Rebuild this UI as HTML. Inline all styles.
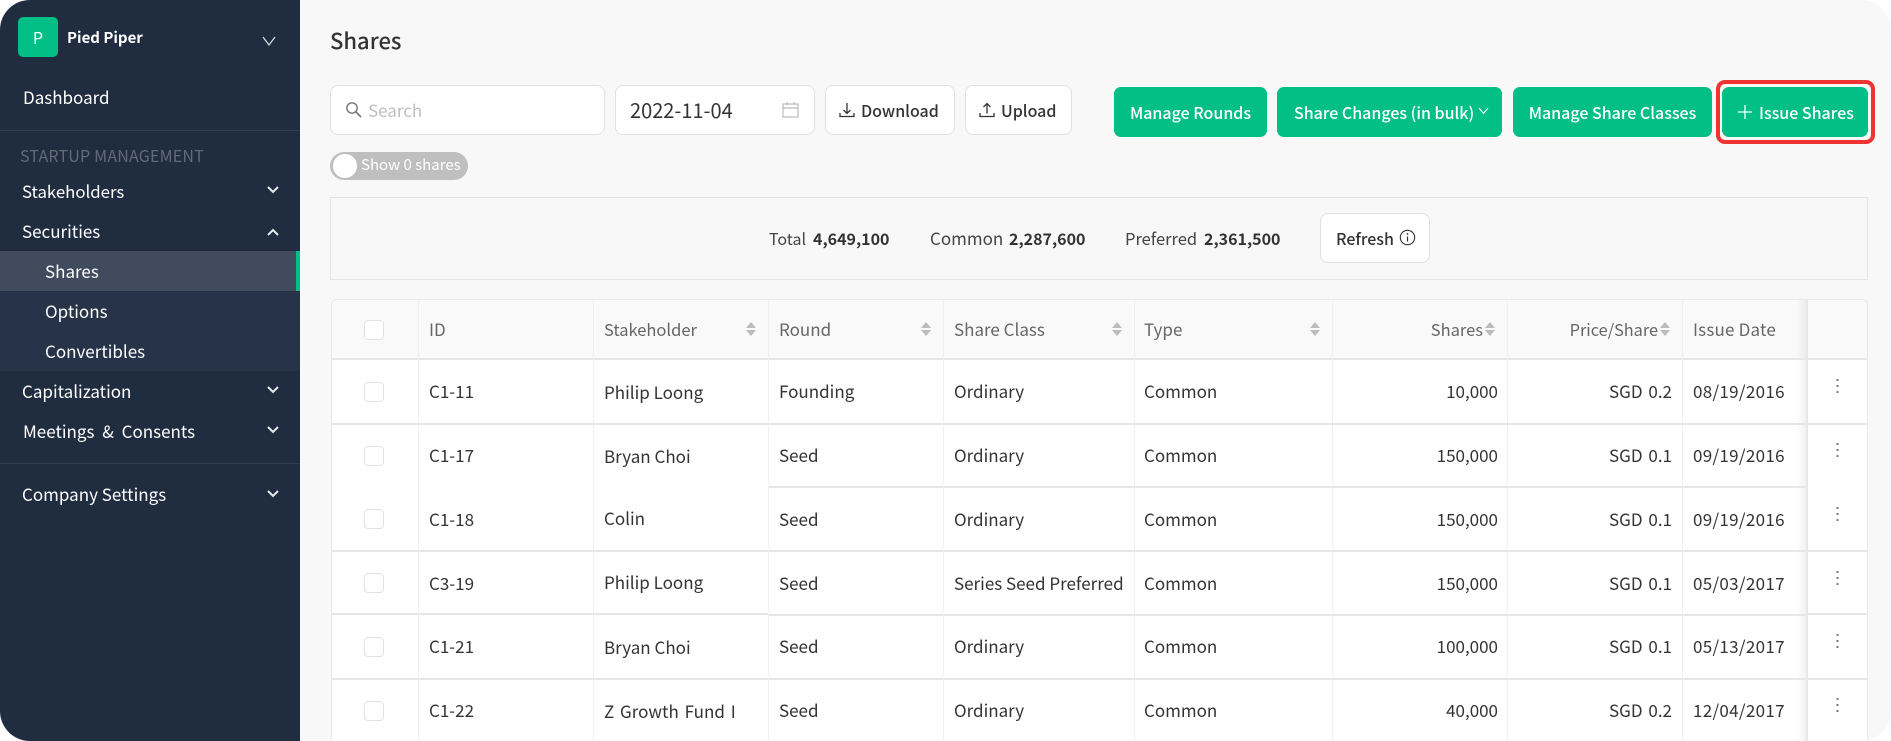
<!DOCTYPE html>
<html><head><meta charset="utf-8"><title>Shares</title>
<style>
html,body{margin:0;padding:0;background:#fff;width:1891px;height:741px;overflow:hidden}
body{font-family:"Noto Sans CJK KR","Liberation Sans",sans-serif;font-size:17px;color:#333}
#app{position:absolute;left:0;top:0;width:1891px;height:741px;background:#f8f8f8;border-radius:30px;overflow:hidden}
.a,.t,.b,.r,.h,.v{position:absolute}
.t{line-height:24px;height:24px;white-space:nowrap}
.s{color:#fff}
.r{line-height:24px;height:24px;white-space:nowrap;text-align:right}
.box{position:absolute;background:#fff;border:1px solid #e0e0e0;border-radius:8px;box-sizing:border-box}
.g{position:absolute;top:87px;height:50px;background:#02bf85;border-radius:7px;color:#fff;font-weight:500;line-height:50px;text-align:center;white-space:nowrap;font-size:16px}
.h{height:1.5px;background:#e6e6e6}
.v{width:1px;background:#f0f0f0}
.c{position:absolute;left:364px;width:20px;height:20px;box-sizing:border-box;background:#fff;border:1px solid #e2e2e2;border-radius:4px}
.hd{color:#666}
.n{font-size:16px;font-weight:700}
.m{font-size:16px;font-weight:500}
.d{letter-spacing:.3px}
.p{word-spacing:2px}
svg{position:absolute;display:block}
</style></head><body>
<div id="app">
<div class="a" style="left:0;top:0;width:300px;height:741px;background:#202c3f"></div>
<div class="a" style="left:0;top:251px;width:300px;height:120px;background:#263348"></div>
<div class="a" style="left:0;top:251px;width:296px;height:40px;background:#404b5d"></div>
<div class="a" style="left:296px;top:251px;width:4px;height:40px;background:#02bf85"></div>
<div class="a" style="left:18px;top:17px;width:40px;height:40px;background:#02bf85;border-radius:5px;color:#fff;text-align:center;line-height:40px;font-size:16px">P</div>
<div class="t s" style="left:67px;top:26px;font-size:15px;font-weight:700">Pied Piper</div>
<svg style="left:262px;top:36px" width="14" height="10" viewBox="0 0 14 10"><path d="M1 1l6 8 6-8" fill="none" stroke="#dfe3e8" stroke-width="1.2"/></svg>
<div class="t s" style="left:23px;top:85px;font-size:17px">Dashboard</div>
<div class="a" style="left:0;top:130px;width:300px;height:1px;background:#323e50"></div>
<div class="t" style="left:20px;top:143px;font-size:16px;letter-spacing:.2px;color:#626b7a">STARTUP MANAGEMENT</div>
<div class="t s" style="left:22px;top:179px;font-size:16.800px">Stakeholders</div>
<svg style="left:267px;top:186px" width="12" height="8" viewBox="0 0 12 8"><path d="M1 1l5 5 5-5" fill="none" stroke="#e8eaed" stroke-width="2"/></svg>
<div class="t s" style="left:22px;top:219px;font-size:17px">Securities</div>
<svg style="left:267px;top:228px" width="12" height="8" viewBox="0 0 12 8"><path d="M1 7l5-5 5 5" fill="none" stroke="#e8eaed" stroke-width="2"/></svg>
<div class="t s" style="left:45px;top:259px;font-size:17px">Shares</div>
<div class="t s" style="left:45px;top:299px;font-size:17px">Options</div>
<div class="t s" style="left:45px;top:339px;font-size:17px">Convertibles</div>
<div class="t s" style="left:22px;top:379px;font-size:17px">Capitalization</div>
<svg style="left:267px;top:386px" width="12" height="8" viewBox="0 0 12 8"><path d="M1 1l5 5 5-5" fill="none" stroke="#e8eaed" stroke-width="2"/></svg>
<div class="t s" style="left:23px;top:419px;font-size:17px;word-spacing:4px">Meetings &amp; Consents</div>
<svg style="left:267px;top:426px" width="12" height="8" viewBox="0 0 12 8"><path d="M1 1l5 5 5-5" fill="none" stroke="#e8eaed" stroke-width="2"/></svg>
<div class="a" style="left:0;top:463px;width:300px;height:1px;background:#323e50"></div>
<div class="t s" style="left:22px;top:482px;font-size:17px">Company Settings</div>
<svg style="left:267px;top:490px" width="12" height="8" viewBox="0 0 12 8"><path d="M1 1l5 5 5-5" fill="none" stroke="#e8eaed" stroke-width="2"/></svg>

<div class="t" style="left:330px;top:28px;font-size:22px;font-weight:500;color:#333">Shares</div>

<div class="box" style="left:330px;top:85px;width:275px;height:50px"></div>
<svg style="left:345px;top:101px" width="18" height="18" viewBox="0 0 18 18"><circle cx="7" cy="7" r="5.2" fill="none" stroke="#777" stroke-width="1.4"/><path d="M11 11l5 5" stroke="#777" stroke-width="1.6"/></svg>
<div class="t" style="left:368px;top:98px;color:#bfbfbf">Search</div>
<div class="box" style="left:615px;top:85px;width:200px;height:50px"></div>
<div class="t" style="left:630px;top:98px;font-size:20px;color:#333">2022-11-04</div>
<svg style="left:782px;top:101px" width="17" height="17" viewBox="0 0 17 17"><rect x="1" y="3" width="15" height="13" fill="none" stroke="#bbb" stroke-width="1.2"/><path d="M1 7h15M5 1v3M12 1v3" stroke="#bbb" stroke-width="1.2"/></svg>
<div class="box" style="left:825px;top:85px;width:130px;height:50px"></div>
<svg style="left:839px;top:102px" width="16" height="16" viewBox="0 0 16 16"><path d="M8 1v10M4.500 8l3.500 3.500L11.500 8M1 11v3.500h14V11" fill="none" stroke="#333" stroke-width="1.300"/></svg>
<div class="t m" style="left:861px;top:98px;color:#333">Download</div>
<div class="box" style="left:965px;top:85px;width:107px;height:50px"></div>
<svg style="left:979px;top:102px" width="16" height="16" viewBox="0 0 16 16"><path d="M8 11.500V1.500M4.500 5L8 1.500 11.500 5M1 11v3.500h14V11" fill="none" stroke="#333" stroke-width="1.300"/></svg>
<div class="t m" style="left:1001px;top:98px;color:#333">Upload</div>

<div class="a" style="left:330px;top:152px;width:138px;height:28px;border-radius:14px;background:#bfbfbf"></div>
<div class="a" style="left:333px;top:154px;width:24px;height:24px;border-radius:50%;background:#fff"></div>
<div class="t" style="left:361px;top:153px;font-size:15px;color:#fff">Show 0 shares</div>

<div class="g" style="left:1114px;width:153px">Manage Rounds</div>
<div class="g" style="left:1277px;width:225px;text-align:left;text-indent:17px">Share Changes (in bulk)</div>
<svg style="left:1478px;top:107px" width="11" height="8" viewBox="0 0 11 8"><path d="M1 1l4.500 5.500L10 1" fill="none" stroke="#fff" stroke-width="1"/></svg>
<div class="g" style="left:1513px;width:199px">Manage Share Classes</div>
<div class="g" style="left:1722px;width:146px;text-align:left;text-indent:37px">Issue Shares</div>
<svg style="left:1737px;top:104px" width="16" height="16" viewBox="0 0 16 16"><path d="M8 1v14M1 8h14" stroke="#fff" stroke-width="1.300"/></svg>
<div class="a" style="left:1716px;top:80px;width:159px;height:64px;box-sizing:border-box;border:4px solid #ef3434;border-radius:9px"></div>

<div class="a" style="left:330px;top:197px;width:1538px;height:83px;box-sizing:border-box;border:1px solid #e4e4e4"></div>
<div class="t" style="left:769px;top:226px;font-size:16px;color:#444">Total</div>
<div class="t n" style="left:813px;top:226px">4,649,100</div>
<div class="t" style="left:930px;top:226px;color:#444">Common</div>
<div class="t n" style="left:1009px;top:226px">2,287,600</div>
<div class="t" style="left:1125px;top:226px;font-size:16.500px;color:#444">Preferred</div>
<div class="t n" style="left:1204px;top:226px">2,361,500</div>
<div class="box" style="left:1320px;top:213px;width:110px;height:50px"></div>
<div class="t m" style="left:1336px;top:226px">Refresh</div>
<svg style="left:1399px;top:229px" width="17" height="17" viewBox="0 0 17 17"><circle cx="8.500" cy="8.500" r="7.200" fill="none" stroke="#333" stroke-width="1.100"/><path d="M8.500 7.500v5" stroke="#333" stroke-width="1.200"/><circle cx="8.500" cy="5" r="0.900" fill="#333"/></svg>

<!-- table -->
<div class="a" style="left:331px;top:299px;width:1537px;height:442px;background:#fff;border:1px solid #e8e8e8;border-bottom:0;box-sizing:border-box;border-radius:6px 6px 0 0"></div>
<div class="a" style="left:332px;top:300px;width:1535px;height:59px;background:#f9f9f9;border-radius:6px 6px 0 0"></div>
<div class="a" style="left:1796px;top:300px;width:10px;height:441px;background:linear-gradient(90deg,rgba(0,0,0,0),rgba(0,0,0,.05))"></div>
<div class="h" style="left:332px;top:358px;width:1535px"></div>
<div class="h" style="left:332px;top:423px;width:1535px"></div>
<div class="h" style="left:768px;top:486px;width:1040px"></div>
<div class="h" style="left:332px;top:550px;width:1535px"></div>
<div class="h" style="left:332px;top:613px;width:437px"></div>
<div class="h" style="left:768px;top:614px;width:1040px"></div>
<div class="h" style="left:1808px;top:613px;width:59px"></div>
<div class="h" style="left:332px;top:678px;width:1535px"></div>
<div class="v" style="left:418px;top:300px;height:441px"></div>
<div class="v" style="left:593px;top:300px;height:441px"></div>
<div class="v" style="left:768px;top:300px;height:441px"></div>
<div class="v" style="left:943px;top:300px;height:441px"></div>
<div class="v" style="left:1134px;top:300px;height:441px"></div>
<div class="v" style="left:1332px;top:300px;height:441px"></div>
<div class="v" style="left:1507px;top:300px;height:441px"></div>
<div class="v" style="left:1682px;top:300px;height:441px"></div>
<div class="a" style="left:1806px;top:300px;width:2px;height:441px;background:#e8e8e8"></div>

<div class="c" style="top:320px"></div><div class="c" style="top:382px"></div><div class="c" style="top:446px"></div><div class="c" style="top:509px"></div><div class="c" style="top:573px"></div><div class="c" style="top:637px"></div><div class="c" style="top:701px"></div>

<div class="t hd" style="left:429px;top:317px">ID</div>
<div class="t hd" style="left:604px;top:317px;font-size:16.500px">Stakeholder</div>
<div class="t hd" style="left:779px;top:317px">Round</div>
<div class="t hd" style="left:954px;top:317px">Share Class</div>
<div class="t hd" style="left:1144px;top:317px">Type</div>
<div class="r hd" style="left:1383px;width:100px;top:317px;font-size:16.500px">Shares</div>
<div class="r hd" style="left:1558px;width:100px;top:317px;font-size:16.300px">Price/Share</div>
<div class="t hd" style="left:1693px;top:317px;letter-spacing:.2px">Issue Date</div>
<svg style="left:745px;top:321px" width="12" height="16" viewBox="0 0 12 16"><path d="M6 1l5 6H1zM1 9h10l-5 6z" fill="#bbb"/></svg>
<svg style="left:920px;top:321px" width="12" height="16" viewBox="0 0 12 16"><path d="M6 1l5 6H1zM1 9h10l-5 6z" fill="#bbb"/></svg>
<svg style="left:1111px;top:321px" width="12" height="16" viewBox="0 0 12 16"><path d="M6 1l5 6H1zM1 9h10l-5 6z" fill="#bbb"/></svg>
<svg style="left:1309px;top:321px" width="12" height="16" viewBox="0 0 12 16"><path d="M6 1l5 6H1zM1 9h10l-5 6z" fill="#bbb"/></svg>
<svg style="left:1484px;top:321px" width="12" height="16" viewBox="0 0 12 16"><path d="M6 1l5 6H1zM1 9h10l-5 6z" fill="#bbb"/></svg>
<svg style="left:1659px;top:321px" width="12" height="16" viewBox="0 0 12 16"><path d="M6 1l5 6H1zM1 9h10l-5 6z" fill="#bbb"/></svg>

<!-- row 1 -->
<div class="t" style="left:429px;top:379px">C1-11</div><div class="t" style="left:604px;top:380px">Philip Loong</div><div class="t" style="left:779px;top:379px">Founding</div><div class="t" style="left:954px;top:379px">Ordinary</div><div class="t" style="left:1144px;top:379px">Common</div>
<div class="r" style="left:1398px;width:100px;top:379px">10,000</div><div class="r p" style="left:1572px;width:100px;top:379px">SGD 0.2</div><div class="t d" style="left:1693px;top:379px">08/19/2016</div>
<!-- row 2 -->
<div class="t" style="left:429px;top:443px">C1-17</div><div class="t" style="left:604px;top:444px">Bryan Choi</div><div class="t" style="left:779px;top:443px">Seed</div><div class="t" style="left:954px;top:443px">Ordinary</div><div class="t" style="left:1144px;top:443px">Common</div>
<div class="r" style="left:1398px;width:100px;top:443px">150,000</div><div class="r p" style="left:1572px;width:100px;top:443px">SGD 0.1</div><div class="t d" style="left:1693px;top:443px">09/19/2016</div>
<!-- row 3 -->
<div class="t" style="left:429px;top:507px">C1-18</div><div class="t" style="left:604px;top:506px">Colin</div><div class="t" style="left:779px;top:507px">Seed</div><div class="t" style="left:954px;top:507px">Ordinary</div><div class="t" style="left:1144px;top:507px">Common</div>
<div class="r" style="left:1398px;width:100px;top:507px">150,000</div><div class="r p" style="left:1572px;width:100px;top:507px">SGD 0.1</div><div class="t d" style="left:1693px;top:507px">09/19/2016</div>
<!-- row 4 -->
<div class="t" style="left:429px;top:571px">C3-19</div><div class="t" style="left:604px;top:570px">Philip Loong</div><div class="t" style="left:779px;top:571px">Seed</div><div class="t" style="left:954px;top:571px">Series Seed Preferred</div><div class="t" style="left:1144px;top:571px">Common</div>
<div class="r" style="left:1398px;width:100px;top:571px">150,000</div><div class="r p" style="left:1572px;width:100px;top:571px">SGD 0.1</div><div class="t d" style="left:1693px;top:571px">05/03/2017</div>
<!-- row 5 -->
<div class="t" style="left:429px;top:634px">C1-21</div><div class="t" style="left:604px;top:635px">Bryan Choi</div><div class="t" style="left:779px;top:634px">Seed</div><div class="t" style="left:954px;top:634px">Ordinary</div><div class="t" style="left:1144px;top:634px">Common</div>
<div class="r" style="left:1398px;width:100px;top:634px">100,000</div><div class="r p" style="left:1572px;width:100px;top:634px">SGD 0.1</div><div class="t d" style="left:1693px;top:634px">05/13/2017</div>
<!-- row 6 -->
<div class="t" style="left:429px;top:698px">C1-22</div><div class="t" style="left:604px;top:699px;word-spacing:2px">Z Growth Fund I</div><div class="t" style="left:779px;top:698px">Seed</div><div class="t" style="left:954px;top:698px">Ordinary</div><div class="t" style="left:1144px;top:698px">Common</div>
<div class="r" style="left:1398px;width:100px;top:698px">40,000</div><div class="r p" style="left:1572px;width:100px;top:698px">SGD 0.2</div><div class="t d" style="left:1693px;top:698px">12/04/2017</div>

<svg style="left:1836px;top:378px" width="3" height="16" viewBox="0 0 3 16"><path d="M.5 1h2v2h-2zM.5 7h2v2h-2zM.5 13h2v2h-2z" fill="#777"/></svg>
<svg style="left:1836px;top:442px" width="3" height="16" viewBox="0 0 3 16"><path d="M.5 1h2v2h-2zM.5 7h2v2h-2zM.5 13h2v2h-2z" fill="#777"/></svg>
<svg style="left:1836px;top:506px" width="3" height="16" viewBox="0 0 3 16"><path d="M.5 1h2v2h-2zM.5 7h2v2h-2zM.5 13h2v2h-2z" fill="#777"/></svg>
<svg style="left:1836px;top:570px" width="3" height="16" viewBox="0 0 3 16"><path d="M.5 1h2v2h-2zM.5 7h2v2h-2zM.5 13h2v2h-2z" fill="#777"/></svg>
<svg style="left:1836px;top:633px" width="3" height="16" viewBox="0 0 3 16"><path d="M.5 1h2v2h-2zM.5 7h2v2h-2zM.5 13h2v2h-2z" fill="#777"/></svg>
<svg style="left:1836px;top:697px" width="3" height="16" viewBox="0 0 3 16"><path d="M.5 1h2v2h-2zM.5 7h2v2h-2zM.5 13h2v2h-2z" fill="#777"/></svg>
</div>
</body></html>
